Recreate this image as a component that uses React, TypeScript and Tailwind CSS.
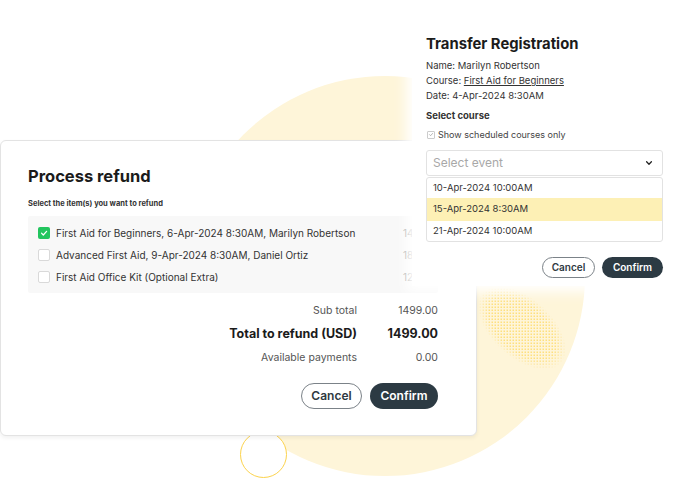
import React from "react";

const font = "font-['Inter',sans-serif]";

function Check({ className = "" }: { className?: string }) {
  return (
    <svg viewBox="0 0 10 10" className={className} fill="none">
      <path d="M2.5 5.2 L4.3 7 L7.6 3.3" stroke="currentColor" strokeWidth="1.2" strokeLinecap="round" strokeLinejoin="round" />
    </svg>
  );
}

function Background() {
  return (
    <div className="absolute inset-0">
      <div className="absolute left-[185px] top-[76px] w-[400px] h-[400px] rounded-full bg-[#fef5d9]" />
      <svg className="absolute left-[440px] top-[270px]" width="160" height="130" viewBox="0 0 160 130">
        <defs>
          <pattern id="dots" width="3" height="3" patternUnits="userSpaceOnUse">
            <rect x="0.6" y="0.6" width="1.2" height="1.2" fill="#fdd34a" />
          </pattern>
          <radialGradient id="fade">
            <stop offset="0.75" stopColor="#fff" stopOpacity="1" />
            <stop offset="1" stopColor="#fff" stopOpacity="0" />
          </radialGradient>
          <mask id="m">
            <ellipse cx="82" cy="58" rx="53" ry="30" fill="url(#fade)" transform="rotate(42 82 58)" />
          </mask>
        </defs>
        <rect width="160" height="130" fill="url(#dots)" mask="url(#m)" />
      </svg>
      <div className="absolute left-[240px] top-[431px] w-[47px] h-[47px] rounded-full bg-white border-[1.5px] border-[#fcd34d]" />
    </div>
  );
}

function RefundRow({ checked, text, amount }: { checked?: boolean; text: string; amount: string }) {
  return (
    <div className="flex items-center h-[22px]">
      {checked ? (
        <div className="w-[12px] h-[12px] rounded-[2px] bg-[#22c55e] flex items-center justify-center text-white">
          <Check className="w-[10px] h-[10px]" />
        </div>
      ) : (
        <div className="w-[12px] h-[12px] rounded-[2px] border border-[#d9d9d9] bg-white" />
      )}
      <span className="ml-[6px] flex-1 text-[10px] text-[#333] whitespace-nowrap">{text}</span>
      <span className="w-[35px] text-[10px] text-[#999] whitespace-nowrap">{amount}</span>
    </div>
  );
}

function RefundPanel() {
  return (
    <div className="absolute left-0 top-[140px] w-[477px] h-[296px] bg-white border border-[#e3e3e3] rounded-[6px] shadow-[0_2px_4px_rgba(0,0,0,0.06)] pl-[27px] pr-[38px] pt-[24px]">
      <div className="text-[16.5px] leading-[22px] font-bold text-[#1b1b1b]">Process refund</div>
      <div className="mt-[12px] text-[7.5px] leading-[10px] font-bold text-[#333]">Select the item(s) you want to refund</div>
      <div className="mt-[7px] h-[77px] bg-[#f8f8f8] rounded-[2px] pl-[10px] pt-[6px]">
        <RefundRow checked text="First Aid for Beginners, 6-Apr-2024 8:30AM, Marilyn Robertson" amount="1499.00" />
        <RefundRow text="Advanced First Aid, 9-Apr-2024 8:30AM, Daniel Ortiz" amount="1850.00" />
        <RefundRow text="First Aid Office Kit (Optional Extra)" amount="120.00" />
      </div>
      <div className="mt-[9px] flex flex-col">
        <div className="flex justify-end items-center h-[18px] text-[10.5px] text-[#555]">
          <span>Sub total</span>
          <span className="w-[81px] text-right">1499.00</span>
        </div>
        <div className="flex justify-end items-center h-[28px] text-[12.5px] font-bold text-[#1b1b1b]">
          <span>Total to refund (USD)</span>
          <span className="w-[81px] text-right">1499.00</span>
        </div>
        <div className="flex justify-end items-center h-[20px] text-[10.5px] text-[#555]">
          <span>Available payments</span>
          <span className="w-[81px] text-right">0.00</span>
        </div>
      </div>
      <div className="mt-[15px] flex justify-end gap-[8px]">
        <button className="w-[61px] h-[26px] rounded-full border border-[#7b8288] text-[12px] font-semibold text-[#2f3a42] bg-white">Cancel</button>
        <button className="w-[68px] h-[26px] rounded-full bg-[#2c3a43] text-[12px] font-semibold text-white">Confirm</button>
      </div>
    </div>
  );
}

function TransferPanel() {
  return (
    <div className="absolute left-[412px] top-[-20px] w-[300px] h-[306px] bg-white shadow-[0_0_12px_6px_#ffffff] pl-[14px] pt-[54px]">
      <div className="text-[14.8px] leading-[20px] font-bold text-[#1b1b1b]">Transfer Registration</div>
      <div className="mt-[4px] text-[9.5px] text-[#333]">
        <div className="h-[15px] leading-[15px]">Name: Marilyn Robertson</div>
        <div className="h-[15px] leading-[15px]">
          Course: <span className="underline">First Aid for Beginners</span>
        </div>
        <div className="h-[15px] leading-[15px]">Date: 4-Apr-2024 8:30AM</div>
      </div>
      <div className="mt-[5px] h-[15px] leading-[15px] text-[9.5px] font-bold text-[#333]">Select course</div>
      <div className="mt-[4px] h-[15px] flex items-center text-[9px] text-[#444]">
        <div className="w-[8px] h-[8px] ml-[1px] border border-[#ccc] rounded-[1px] flex items-center justify-center text-[#999]">
          <Check className="w-[7px] h-[7px]" />
        </div>
        <span className="ml-[3px]">Show scheduled courses only</span>
      </div>
      <div className="mt-[8px] w-[237px] h-[26px] border border-[#e2e2e2] rounded-[3px] flex items-center justify-between pl-[6px] pr-[9px]">
        <span className="text-[12px] text-[#a8a8a8]">Select event</span>
        <svg viewBox="0 0 10 10" className="w-[8px] h-[8px]" fill="none">
          <path d="M2 3.5 L5 6.5 L8 3.5" stroke="#222" strokeWidth="1.6" strokeLinecap="round" strokeLinejoin="round" />
        </svg>
      </div>
      <div className="mt-[1px] w-[237px] h-[65px] border border-[#e2e2e2] rounded-[3px] text-[9.5px] text-[#333] overflow-hidden">
        <div className="h-[20px] flex items-center pl-[6px]">10-Apr-2024 10:00AM</div>
        <div className="h-[23px] flex items-center pl-[6px] bg-[#fdf0b5]">15-Apr-2024 8:30AM</div>
        <div className="h-[20px] flex items-center pl-[6px]">21-Apr-2024 10:00AM</div>
      </div>
      <div className="mt-[15px] w-[237px] flex justify-end gap-[7px]">
        <button className="w-[53px] h-[21px] rounded-full border border-[#7b8288] text-[10px] font-semibold text-[#2f3a42] bg-white">Cancel</button>
        <button className="w-[61px] h-[21px] rounded-full bg-[#2c3a43] text-[10px] font-semibold text-white">Confirm</button>
      </div>
    </div>
  );
}

export default function App() {
  return (
    <div className={`relative w-[700px] h-[479px] overflow-hidden bg-white ${font}`}>
      <Background />
      <RefundPanel />
      <TransferPanel />
    </div>
  );
}
